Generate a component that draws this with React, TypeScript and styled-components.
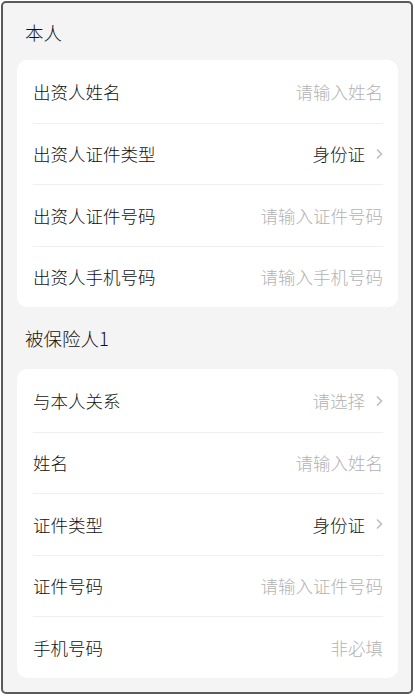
import React, { FC } from 'react';
import styled, { createGlobalStyle } from 'styled-components';

const GlobalStyle = createGlobalStyle`
  html, body {
    margin: 0;
    padding: 0;
    background: #ffffff;
  }
  body {
    font-family: 'Noto Sans CJK SC', 'Noto Sans', sans-serif;
  }
`;

const Frame = styled.div`
  box-sizing: border-box;
  margin: 1px 0 0 1px;
  width: 412px;
  height: 693px;
  border: 2px solid #5a5a5a;
  border-radius: 5px;
  background: #f4f4f4;
  padding: 0 13px 0 14px;
  overflow: hidden;
`;

const SectionTitle = styled.div<{ $first?: boolean }>`
  height: ${(p) => (p.$first ? '57px' : '62px')};
  display: flex;
  align-items: center;
  padding: ${(p) => (p.$first ? '1px 0 0 8px' : '0 0 0 8px')};
  box-sizing: border-box;
  font-size: 18.5px;
  font-weight: 300;
  color: #111111;
`;

const Card = styled.div`
  background: #ffffff;
  border-radius: 10px;
  padding: 1px 15px 0 16px;
`;

const Row = styled.div`
  box-sizing: border-box;
  height: 61.5px;
  display: flex;
  align-items: center;
  justify-content: space-between;
  font-size: 17.5px;
  font-weight: 300;

  & + & {
    border-top: 1px solid #efefef;
  }
`;

const Label = styled.span`
  color: #111111;
`;

const Value = styled.span<{ $placeholder?: boolean }>`
  display: flex;
  align-items: center;
  gap: 11px;
  color: ${(p) => (p.$placeholder ? '#b2b2b2' : '#1a1a1a')};
`;

const Chevron = () => (
  <svg width="7" height="12" viewBox="0 0 7 12">
    <path d="M1 1.5 L5.5 6 L1 10.5" fill="none" stroke="#bdbdbd" strokeWidth="1.6" />
  </svg>
);

type Field = {
  label: string;
  value: string;
  placeholder?: boolean;
  arrow?: boolean;
};

const selfFields: Field[] = [
  { label: '出资人姓名', value: '请输入姓名', placeholder: true },
  { label: '出资人证件类型', value: '身份证', arrow: true },
  { label: '出资人证件号码', value: '请输入证件号码', placeholder: true },
  { label: '出资人手机号码', value: '请输入手机号码', placeholder: true }
];

const insuredFields: Field[] = [
  { label: '与本人关系', value: '请选择', placeholder: true, arrow: true },
  { label: '姓名', value: '请输入姓名', placeholder: true },
  { label: '证件类型', value: '身份证', arrow: true },
  { label: '证件号码', value: '请输入证件号码', placeholder: true },
  { label: '手机号码', value: '非必填', placeholder: true }
];

const FieldCard: FC<{ fields: Field[] }> = ({ fields }) => (
  <Card>
    {fields.map((f) => (
      <Row key={f.label}>
        <Label>{f.label}</Label>
        <Value $placeholder={f.placeholder}>
          {f.value}
          {f.arrow && <Chevron />}
        </Value>
      </Row>
    ))}
  </Card>
);

const App: FC = () => (
  <>
    <GlobalStyle />
    <Frame>
      <SectionTitle $first>本人</SectionTitle>
      <FieldCard fields={selfFields} />
      <SectionTitle>被保险人1</SectionTitle>
      <FieldCard fields={insuredFields} />
    </Frame>
  </>
);

export default App;
